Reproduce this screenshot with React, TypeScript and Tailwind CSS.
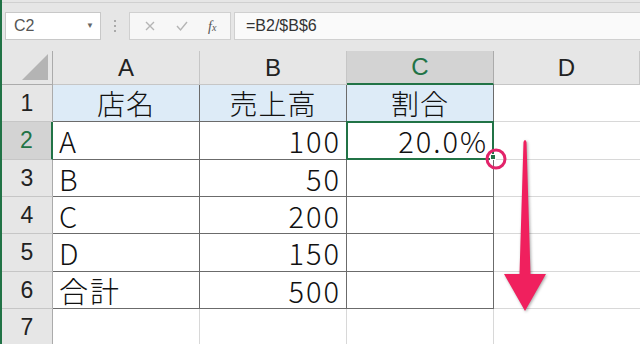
import React from "react";

const rowH = [37, 38, 37, 37, 38, 37, 37];

type Cell = { text?: string; align?: "left" | "right" | "center"; blue?: boolean; dark?: boolean };

const data: Cell[][] = [
  [{ text: "店名", align: "center", blue: true, dark: true }, { text: "売上高", align: "center", blue: true, dark: true }, { text: "割合", align: "center", blue: true, dark: true }],
  [{ text: "A", align: "left", dark: true }, { text: "100", align: "right", dark: true }, { text: "20.0%", align: "right", dark: true }],
  [{ text: "B", align: "left", dark: true }, { text: "50", align: "right", dark: true }, { dark: true }],
  [{ text: "C", align: "left", dark: true }, { text: "200", align: "right", dark: true }, { dark: true }],
  [{ text: "D", align: "left", dark: true }, { text: "150", align: "right", dark: true }, { dark: true }],
  [{ text: "合計", align: "left", dark: true }, { text: "500", align: "right", dark: true }, { dark: true }],
  [{}, {}, {}],
];

const cellFont = { fontFamily: '"Noto Sans CJK JP", "Noto Sans", sans-serif' };
const hdrFont = { fontFamily: '"Liberation Sans", Arial, sans-serif' };

export default function App() {
  return (
    <div className="relative w-[640px] h-[344px] overflow-hidden bg-[#e6e6e6] border-l-2 border-[#217346]">
      {/* formula bar */}
      <div className="h-[49px] border-t border-[#d0d0d0] mt-[2px] flex items-start pt-[9px] text-[#444]" style={hdrFont}>
        <div className="ml-[3px] w-[96px] h-[28px] bg-white border border-[#c8c8c8] flex items-center justify-between pl-[8px] pr-[6px]">
          <span className="text-[16px] text-[#555]">C2</span>
          <span className="text-[8px] text-[#666]">▼</span>
        </div>
        <div className="w-[28px] h-[28px] flex flex-col items-center justify-center gap-[3px]">
          <span className="w-[2px] h-[2px] bg-[#aaa]" />
          <span className="w-[2px] h-[2px] bg-[#aaa]" />
          <span className="w-[2px] h-[2px] bg-[#aaa]" />
        </div>
        <div className="w-[102px] h-[28px] bg-[#f7f7f7] border border-[#d0d0d0] flex items-center justify-around px-[4px] text-[#b8b8b8]">
          <svg width="12" height="12" viewBox="0 0 12 12"><path d="M2 2 L10 10 M10 2 L2 10" stroke="#b5b5b5" strokeWidth="1.4" /></svg>
          <svg width="14" height="12" viewBox="0 0 14 12"><path d="M2 6 L5.5 10 L12 2" stroke="#b5b5b5" strokeWidth="1.4" fill="none" /></svg>
          <span className="text-[14px] italic text-[#555]" style={{ fontFamily: '"Liberation Serif", serif' }}>f<span className="text-[10px]">x</span></span>
        </div>
        <div className="ml-[3px] flex-1 h-[28px] bg-[#fafafa] border border-[#d0d0d0] border-r-0 flex items-center pl-[11px]">
          <span className="text-[16px] text-[#333]">=B2/$B$6</span>
        </div>
      </div>

      {/* grid */}
      <div className="grid grid-cols-[51px_147px_147px_147px_1fr]">
        <div className="h-[34px] bg-[#e6e6e6] border-r border-b border-[#ababab] flex items-end justify-end pr-[4px] pb-[4px]">
          <div className="w-0 h-0 border-l-[26px] border-l-transparent border-b-[26px] border-b-[#b4b4b4]" />
        </div>
        {["A", "B", "C", "D"].map((c) => (
          <div
            key={c}
            className={
              c === "C"
                ? "h-[34px] bg-[#d3d3d3] border-r border-[#ababab] border-b-2 border-b-[#217346] flex items-center justify-center text-[24px] text-[#217346]"
                : "h-[34px] bg-[#e6e6e6] border-r border-b border-[#c6c6c6] flex items-center justify-center text-[24px] text-[#222]"
            }
            style={hdrFont}
          >
            {c}
          </div>
        ))}
        {data.map((row, r) => (
          <React.Fragment key={r}>
            <div
              className={
                r === 1
                  ? "bg-[#d3d3d3] border-r-2 border-r-[#217346] border-b border-[#c6c6c6] flex items-center justify-center text-[23px] text-[#217346]"
                  : "bg-[#e6e6e6] border-r border-[#ababab] border-b border-b-[#c6c6c6] flex items-center justify-center text-[23px] text-[#222]"
              }
              style={{ ...hdrFont, height: rowH[r] }}
            >
              {r + 1}
            </div>
            {row.map((cell, ci) => (
              <div
                key={ci}
                className={
                  (cell.dark ? "border-r border-b border-[#6b6b6b] " : "border-r border-b border-[#d8d8d8] ") +
                  (cell.blue ? "bg-[#ddebf7] tracking-[1px] text-[28px] " : "bg-white tracking-[2px] text-[29px] ") +
                  (cell.align === "center" ? "justify-center " : cell.align === "right" ? "justify-end pr-[5px] " : "justify-start pl-[6px] ") +
                  "relative flex items-center font-light leading-none text-[#111] overflow-visible"
                }
                style={{ ...cellFont, height: rowH[r] }}
              >
                {cell.text}
                {r === 1 && ci === 2 && (
                  <div className="absolute -left-[1px] -top-[1px] w-[148px] h-[39px] border-2 border-[#217346]" />
                )}
              </div>
            ))}
            <div className="bg-white border-b border-[#d8d8d8]" style={{ height: rowH[r] }} />
          </React.Fragment>
        ))}
      </div>

      <div className="absolute left-[488px] top-[154px] w-[6px] h-[6px] bg-[#217346] border border-white" />
      <svg className="absolute left-[481px] top-[146px]" width="26" height="26" viewBox="0 0 26 26">
        <circle cx="13" cy="13" r="9" fill="none" stroke="#e2246a" strokeWidth="3" />
      </svg>

      <svg
        className="absolute left-[499px] top-[136px]"
        width="50"
        height="180"
        viewBox="0 0 50 180"
        style={{ filter: "drop-shadow(1px 1px 1.5px rgba(0,0,0,0.35))" }}
      >
        <path d="M22.5 6 Q24 2 25.5 6 L29.5 138 L45 138 L24 175 L3 138 L18.5 138 Z" fill="#f0205e" />
      </svg>
    </div>
  );
}
